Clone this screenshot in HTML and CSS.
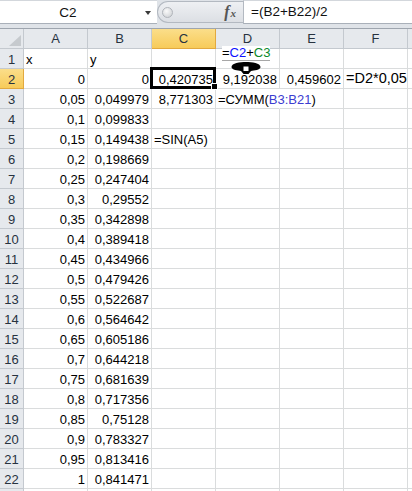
FILE: index.html
```html
<!DOCTYPE html>
<html>
<head>
<meta charset="utf-8">
<link rel="stylesheet" href="styles.css">
</head>
<body>
<div class="fbar">
  <div class="namebox"><span class="name">C2</span><span class="dd"></span></div>
  <div class="mid"><span class="knob"></span><span class="fx"><i>f</i><i class="sx">x</i></span></div>
  <div class="formula">=(B2+B22)/2</div>
</div>
<div class="sheet">
  <div class="grid">
    <div class="h corner"><span class="tri"></span></div><div class="h">A</div><div class="h">B</div><div class="h hs">C</div><div class="h">D</div><div class="h">E</div><div class="h">F</div><div class="h"></div>

    <div class="rh">1</div><div class="c l">x</div><div class="c l">y</div><div class="c"></div><div class="c"></div><div class="c"></div><div class="c"></div><div class="c"></div>
    <div class="rh rhs">2</div><div class="c">0</div><div class="c">0</div><div class="c sel">0,420735<span class="handle"></span></div><div class="c">9,192038</div><div class="c">0,459602</div><div class="c l big">=D2*0,05</div><div class="c"></div>
    <div class="rh">3</div><div class="c">0,05</div><div class="c">0,049979</div><div class="c">8,771303</div><div class="c l nob">=СУММ(<span class="ref">B3:B21</span>)</div><div class="c"></div><div class="c"></div><div class="c"></div>
    <div class="rh">4</div><div class="c">0,1</div><div class="c">0,099833</div><div class="c"></div><div class="c"></div><div class="c"></div><div class="c"></div><div class="c"></div>
    <div class="rh">5</div><div class="c">0,15</div><div class="c">0,149438</div><div class="c l">=SIN(A5)</div><div class="c"></div><div class="c"></div><div class="c"></div><div class="c"></div>
    <div class="rh">6</div><div class="c">0,2</div><div class="c">0,198669</div><div class="c"></div><div class="c"></div><div class="c"></div><div class="c"></div><div class="c"></div>
    <div class="rh">7</div><div class="c">0,25</div><div class="c">0,247404</div><div class="c"></div><div class="c"></div><div class="c"></div><div class="c"></div><div class="c"></div>
    <div class="rh">8</div><div class="c">0,3</div><div class="c">0,29552</div><div class="c"></div><div class="c"></div><div class="c"></div><div class="c"></div><div class="c"></div>
    <div class="rh">9</div><div class="c">0,35</div><div class="c">0,342898</div><div class="c"></div><div class="c"></div><div class="c"></div><div class="c"></div><div class="c"></div>
    <div class="rh">10</div><div class="c">0,4</div><div class="c">0,389418</div><div class="c"></div><div class="c"></div><div class="c"></div><div class="c"></div><div class="c"></div>
    <div class="rh">11</div><div class="c">0,45</div><div class="c">0,434966</div><div class="c"></div><div class="c"></div><div class="c"></div><div class="c"></div><div class="c"></div>
    <div class="rh">12</div><div class="c">0,5</div><div class="c">0,479426</div><div class="c"></div><div class="c"></div><div class="c"></div><div class="c"></div><div class="c"></div>
    <div class="rh">13</div><div class="c">0,55</div><div class="c">0,522687</div><div class="c"></div><div class="c"></div><div class="c"></div><div class="c"></div><div class="c"></div>
    <div class="rh">14</div><div class="c">0,6</div><div class="c">0,564642</div><div class="c"></div><div class="c"></div><div class="c"></div><div class="c"></div><div class="c"></div>
    <div class="rh">15</div><div class="c">0,65</div><div class="c">0,605186</div><div class="c"></div><div class="c"></div><div class="c"></div><div class="c"></div><div class="c"></div>
    <div class="rh">16</div><div class="c">0,7</div><div class="c">0,644218</div><div class="c"></div><div class="c"></div><div class="c"></div><div class="c"></div><div class="c"></div>
    <div class="rh">17</div><div class="c">0,75</div><div class="c">0,681639</div><div class="c"></div><div class="c"></div><div class="c"></div><div class="c"></div><div class="c"></div>
    <div class="rh">18</div><div class="c">0,8</div><div class="c">0,717356</div><div class="c"></div><div class="c"></div><div class="c"></div><div class="c"></div><div class="c"></div>
    <div class="rh">19</div><div class="c">0,85</div><div class="c">0,75128</div><div class="c"></div><div class="c"></div><div class="c"></div><div class="c"></div><div class="c"></div>
    <div class="rh">20</div><div class="c">0,9</div><div class="c">0,783327</div><div class="c"></div><div class="c"></div><div class="c"></div><div class="c"></div><div class="c"></div>
    <div class="rh">21</div><div class="c">0,95</div><div class="c">0,813416</div><div class="c"></div><div class="c"></div><div class="c"></div><div class="c"></div><div class="c"></div>
    <div class="rh">22</div><div class="c">1</div><div class="c">0,841471</div><div class="c"></div><div class="c"></div><div class="c"></div><div class="c"></div><div class="c"></div>
    <div class="rh"></div><div class="c"></div><div class="c"></div><div class="c"></div><div class="c"></div><div class="c"></div><div class="c"></div><div class="c"></div>
  </div>
  <div class="popup">=<span class="blue">C2</span>+<span class="green">C3</span></div>
  <div class="popline"></div>
  <svg class="cursor" width="30" height="12" viewBox="0 0 30 12">
    <path d="M0.5,5 C0.5,1 9,0 15,0 C21,0 29.5,1 29.5,5 C29.5,8 23,8.5 20,9 L17.5,12 L12.5,12 L10,9 C7,8.5 0.5,8 0.5,5Z" fill="#000"/>
    <rect x="12.5" y="4.5" width="5" height="4.5" fill="#fff"/>
  </svg>
</div>
</body>
</html>
```
FILE: styles.css
```css
html, body {
  margin: 0;
  padding: 0;
  background: #fff;
  overflow: hidden;
}
body {
  font-family: "Liberation Sans", Arial, sans-serif;
  color: #000;
}
.fbar {
  height: 28px;
  background: #dfe3e8;
  display: flex;
  align-items: flex-start;
}
.namebox {
  width: 157px;
  height: 24px;
  box-sizing: border-box;
  background: #fff;
  border-top: 1px solid #d3d7dc;
  border-bottom: 1px solid #a9b0b9;
  display: flex;
  align-items: center;
}
.name {
  width: 136px;
  text-align: center;
  font-size: 13.5px;
  color: #111;
}
.dd {
  margin-left: 9px;
  width: 0;
  height: 0;
  border-left: 3.5px solid transparent;
  border-right: 3.5px solid transparent;
  border-top: 4px solid #3a3a3a;
  margin-top: 2px;
}
.mid {
  width: 86px;
  height: 22px;
  margin-top: 1px;
  box-sizing: border-box;
  border: 1px solid #b3b9c1;
  border-right: none;
  border-radius: 11px 0 0 11px;
  background: linear-gradient(#eef0f3, #dcdfe4);
  display: flex;
  align-items: center;
}
.knob {
  width: 11px;
  height: 11px;
  border-radius: 50%;
  margin-left: 4px;
  box-sizing: border-box;
  border: 1px solid #b0b4ba;
  background: radial-gradient(circle at 40% 35%, #fafafa, #c9ccd0);
}
.fx {
  margin-left: auto;
  margin-right: 7px;
  font-family: "Liberation Serif", serif;
  font-style: italic;
  font-weight: bold;
  color: #555;
  font-size: 16px;
  line-height: 1;
}
.fx i { font-style: italic; }
.fx .sx { font-size: 11px; margin-left: 1px; }
.formula {
  flex: 1;
  height: 24px;
  box-sizing: border-box;
  background: #fff;
  border-top: 1px solid #d3d7dc;
  border-left: 1px solid #b3b9c1;
  border-bottom: 1px solid #a9b0b9;
  padding-left: 7px;
  font-size: 13.5px;
  line-height: 22px;
  color: #111;
}
.sheet {
  position: relative;
  border-top: 1px solid #9ea5ae;
}
.grid {
  display: grid;
  grid-template-columns: 24px repeat(6, 64px) 1fr;
  grid-auto-rows: 20px;
}
.grid > div {
  box-sizing: border-box;
  white-space: nowrap;
  font-size: 13px;
}
.h, .rh {
  background: #e6e9ed;
  border-right: 1px solid #c4c9cf;
  border-bottom: 1px solid #c4c9cf;
  color: #27323f;
  text-align: center;
  line-height: 19px;
}
.h { font-size: 13.5px; }
.rh { line-height: 17px; padding-top: 2px; }
.corner { position: relative; }
.tri {
  position: absolute;
  right: 2px;
  bottom: 2px;
  width: 0;
  height: 0;
  border-left: 12px solid transparent;
  border-bottom: 11px solid #c6cace;
}
.hs, .rhs {
  background: linear-gradient(#fbde8a, #f7cb5a);
  border-right-color: #e2a93f;
  border-bottom-color: #e2a93f;
}
.c {
  border-right: 1px solid #dadcdd;
  border-bottom: 1px solid #dadcdd;
  text-align: right;
  padding: 2px 2px 0 3px;
  line-height: 17px;
  overflow: visible;
}
.c.l { text-align: left; padding-left: 2px; }
.nob { border-right-color: transparent !important; }
.big { font-size: 14.5px !important; padding-top: 1px !important; }
.ref { color: #3c3cd0; }
.sel { position: relative; z-index: 2; }
.sel::after {
  content: "";
  position: absolute;
  top: -2px;
  left: -2px;
  right: -1px;
  bottom: -1px;
  border: 3px solid #000;
  pointer-events: none;
}
.handle {
  position: absolute;
  right: -3px;
  bottom: -2px;
  width: 5px;
  height: 5px;
  background: #000;
  border: 1px solid #fff;
  z-index: 3;
}
.popup {
  position: absolute;
  left: 222px;
  top: 17px;
  width: 48px;
  height: 14px;
  background: #fff;
  font-size: 13px;
  line-height: 14px;
  white-space: nowrap;
}
.blue { color: #1010ff; }
.green { color: #0a8a2a; }
.popline {
  position: absolute;
  left: 222px;
  top: 31px;
  width: 48px;
  height: 1px;
  background: #a7a7a7;
}
.cursor {
  position: absolute;
  left: 231px;
  top: 33px;
}
```
